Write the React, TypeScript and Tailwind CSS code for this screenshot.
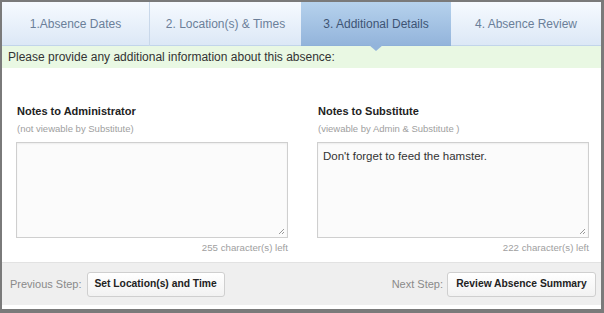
import React from "react";

const font = { fontFamily: '"Liberation Sans", Arial, sans-serif' };

function Tab({ label, active }: { label: string; active?: boolean }) {
  return (
    <div
      className={
        "relative flex items-center justify-center border-b " +
        (active
          ? "bg-gradient-to-b from-[#b6d2ed] to-[#93b4db] text-[#3e5474] border-[#8eb0d8]"
          : "bg-gradient-to-b from-[#f6faff] to-[#dce8f6] text-[#6b7f99] border-[#c2d5ea]")
      }
    >
      <span className="text-[12px]">{label}</span>
      {active && (
        <div className="absolute left-1/2 -translate-x-1/2 top-full z-10 w-0 h-0 border-l-[7px] border-r-[7px] border-t-[6px] border-l-transparent border-r-transparent border-t-[#93b4db]" />
      )}
    </div>
  );
}

function Notes({
  title,
  sub,
  value,
  left,
}: {
  title: string;
  sub: string;
  value: string;
  left: string;
}) {
  return (
    <div className="flex flex-col w-[272px]">
      <div className="text-[11px] font-bold text-[#222] leading-[14px] pl-[1px]">{title}</div>
      <div className="text-[9.5px] text-[#a0a0a0] leading-[12px] mt-[5px] pl-[1px]">{sub}</div>
      <div className="relative mt-[7px] h-[96px] border border-[#cfcfcf] bg-[#fbfbfb] shadow-[inset_0_1px_2px_rgba(0,0,0,0.06)]">
        <div className="px-[5px] pt-[5px] text-[11.5px] text-[#333] leading-[16px]">{value}</div>
        <svg className="absolute right-[2px] bottom-[2px]" width="7" height="7" viewBox="0 0 7 7">
          <line x1="6" y1="1" x2="1" y2="6" stroke="#999" strokeWidth="1" />
          <line x1="6" y1="4" x2="4" y2="6" stroke="#999" strokeWidth="1" />
        </svg>
      </div>
      <div className="text-right text-[9.7px] text-[#a0a0a0] leading-[12px] mt-[4px]">{left}</div>
    </div>
  );
}

export default function App() {
  return (
    <div
      className="w-[604px] h-[313px] border-l-2 border-t-2 border-r-[3px] border-b-[4px] border-[#7a7a7a] bg-white flex flex-col overflow-hidden"
      style={font}
    >
      <div className="grid grid-cols-[148px_151px_150px_1fr] h-[44px] shrink-0">
        <div className="border-r border-[#c9d8ea] flex"><div className="flex-1 grid"><Tab label="1.Absence Dates" /></div></div>
        <Tab label="2. Location(s) & Times" />
        <Tab label="3. Additional Details" active />
        <Tab label="4. Absence Review" />
      </div>
      <div className="h-[22px] shrink-0 bg-[#e9f8e3] flex items-center pl-[6px] text-[12px] text-[#333]">
        Please provide any additional information about this absence:
      </div>
      <div className="flex-1 flex gap-[29px] pl-[14px] pt-[36px]">
        <Notes
          title="Notes to Administrator"
          sub="(not viewable by Substitute)"
          value=""
          left="255 character(s) left"
        />
        <Notes
          title="Notes to Substitute"
          sub="(viewable by Admin & Substitute )"
          value="Don't forget to feed the hamster."
          left="222 character(s) left"
        />
      </div>
      <div className="h-[43px] shrink-0 bg-[#efefef] border-t border-[#e2e2e2] flex items-center justify-between pl-[8px] pr-[5px] mb-[4px]">
        <div className="flex items-center gap-[5px]">
          <span className="text-[11px] text-[#8a8a8a]">Previous Step:</span>
          <button className="h-[25px] w-[138px] rounded-[3px] border border-[#cfcfcf] bg-gradient-to-b from-white to-[#f2f2f2] text-[10.3px] font-bold text-[#222]">
            Set Location(s) and Time
          </button>
        </div>
        <div className="flex items-center gap-[4px]">
          <span className="text-[11px] text-[#8a8a8a]">Next Step:</span>
          <button className="h-[25px] w-[149px] rounded-[3px] border border-[#cfcfcf] bg-gradient-to-b from-white to-[#f2f2f2] text-[10.3px] font-bold text-[#222]">
            Review Absence Summary
          </button>
        </div>
      </div>
    </div>
  );
}
